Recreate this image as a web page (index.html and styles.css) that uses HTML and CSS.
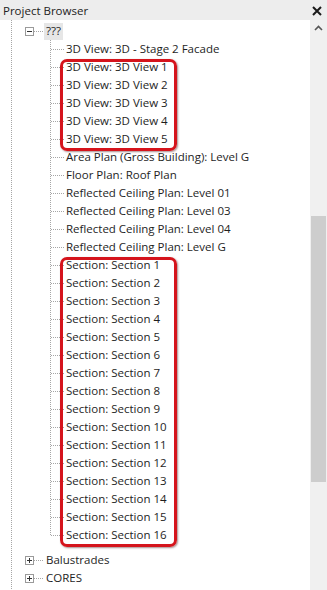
FILE: index.html
```html
<!DOCTYPE html>
<html lang="en">
<head>
    <meta charset="UTF-8">
    <meta name="viewport" content="width=device-width, initial-scale=1.0">
    <title>Project Browser</title>
    <link rel="stylesheet" href="styles.css">
</head>
<body>
    <div class="browser">
        <div class="title">
            <span>Project Browser</span>
            <svg class="close" width="10" height="10" viewBox="0 0 10 10">
                <path d="M1 1L9 9M9 1L1 9" stroke="#1a1a1a" stroke-width="2"/>
            </svg>
        </div>
        <div class="panel">
            <div class="tree">
                <div class="node">
                    <div class="row"><span class="box minus"></span><span class="dash"></span><span class="label sel">???</span></div>
                    <div class="children">
                        <div class="item">3D View: 3D - Stage 2 Facade</div>
                        <div class="mark">
                            <div class="item">3D View: 3D View 1</div>
                            <div class="item">3D View: 3D View 2</div>
                            <div class="item">3D View: 3D View 3</div>
                            <div class="item">3D View: 3D View 4</div>
                            <div class="item">3D View: 3D View 5</div>
                        </div>
                        <div class="item">Area Plan (Gross Building): Level G</div>
                        <div class="item">Floor Plan: Roof Plan</div>
                        <div class="item">Reflected Ceiling Plan: Level 01</div>
                        <div class="item">Reflected Ceiling Plan: Level 03</div>
                        <div class="item">Reflected Ceiling Plan: Level 04</div>
                        <div class="item">Reflected Ceiling Plan: Level G</div>
                        <div class="mark">
                            <div class="item">Section: Section 1</div>
                            <div class="item">Section: Section 2</div>
                            <div class="item">Section: Section 3</div>
                            <div class="item">Section: Section 4</div>
                            <div class="item">Section: Section 5</div>
                            <div class="item">Section: Section 6</div>
                            <div class="item">Section: Section 7</div>
                            <div class="item">Section: Section 8</div>
                            <div class="item">Section: Section 9</div>
                            <div class="item">Section: Section 10</div>
                            <div class="item">Section: Section 11</div>
                            <div class="item">Section: Section 12</div>
                            <div class="item">Section: Section 13</div>
                            <div class="item">Section: Section 14</div>
                            <div class="item">Section: Section 15</div>
                            <div class="item">Section: Section 16</div>
                        </div>
                    </div>
                </div>
                <div class="node closed">
                    <div class="row"><span class="box plus"></span><span class="dash"></span><span class="label">Balustrades</span></div>
                </div>
                <div class="node">
                    <div class="row"><span class="box plus"></span><span class="dash"></span><span class="label">CORES</span></div>
                </div>
            </div>
            <div class="scrollbar">
                <svg class="up" width="17" height="17" viewBox="0 0 17 17">
                    <path d="M5 10L8.5 6.5L12 10" fill="none" stroke="#555" stroke-width="1.6"/>
                </svg>
                <div class="thumb"></div>
            </div>
        </div>
    </div>
</body>
</html>
```

FILE: styles.css
```css
body {
    margin: 0;
    padding: 0;
    background: #fff;
    font-family: 'Open Sans', 'Noto Sans', sans-serif;
    font-size: 11.5px;
    color: #1e1e1e;
}
.browser {
    width: 327px;
    height: 590px;
    overflow: hidden;
    display: flex;
    flex-direction: column;
}
.title {
    height: 20px;
    flex: none;
    background: #ededed;
    display: flex;
    align-items: center;
    justify-content: space-between;
    padding: 0 5px 0 3px;
    font-size: 11.5px;
    color: #222;
}
.close {
    margin-top: 1px;
}
.panel {
    flex: 1;
    display: flex;
    min-height: 0;
}
.tree {
    flex: 1;
    padding-top: 2px;
    background: repeating-linear-gradient(to bottom, #a6a6a6 0 1px, transparent 1px 2px) 11px 0 / 1px 100% no-repeat;
}
.row {
    height: 18px;
    display: flex;
    align-items: center;
    padding-left: 25px;
}
.box {
    width: 7px;
    height: 7px;
    border: 1px solid #9a9a9a;
    position: relative;
    background: #fff;
}
.box::before,
.box::after {
    content: "";
    position: absolute;
    background: #333;
}
.box::before {
    left: 1px;
    top: 3px;
    width: 5px;
    height: 1px;
}
.box.plus::after {
    left: 3px;
    top: 1px;
    width: 1px;
    height: 5px;
}
.dash {
    width: 10px;
    height: 1px;
    background: repeating-linear-gradient(to right, #a6a6a6 0 1px, transparent 1px 2px);
}
.label {
    padding: 1px 2px 2px;
    line-height: 14px;
}
.label.sel {
    background: #e6e6e6;
}
.children {
    margin-left: 50px;
    background: repeating-linear-gradient(to bottom, #a6a6a6 0 1px, transparent 1px 2px) 0 0 / 1px calc(100% - 9px) no-repeat;
}
.item {
    height: 18px;
    line-height: 18px;
    padding-left: 16px;
    white-space: nowrap;
    background: repeating-linear-gradient(to right, #a6a6a6 0 1px, transparent 1px 2px) 1px 9px / 14px 1px no-repeat;
}
.mark {
    position: relative;
}
.mark::after {
    content: "";
    position: absolute;
    left: 10px;
    width: 111px;
    top: 1px;
    bottom: -3px;
    border: 3px solid #d5141c;
    border-radius: 7px;
    box-shadow: 1px 1px 2px rgba(60, 0, 0, 0.45);
}
.node.closed {
    margin-top: 7px;
}
.scrollbar {
    width: 17px;
    flex: none;
    background: #f0f0f0;
}
.up {
    display: block;
}
.thumb {
    margin: 179px 0 0 1px;
    width: 15px;
    height: 266px;
    background: #cdcdcd;
}
```
